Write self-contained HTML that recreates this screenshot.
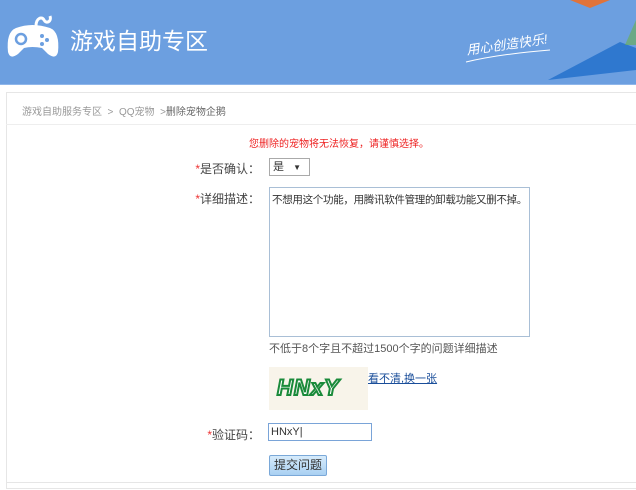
<!DOCTYPE html>
<html><head><meta charset="utf-8"><style>
body{margin:0;width:636px;height:490px;overflow:hidden;background:#fff;font-family:"Liberation Sans","Noto Sans CJK SC",sans-serif;font-size:12px;color:#333;position:relative}
.hdr{position:absolute;left:0;top:0;width:636px;height:84px;background:#6c9fe0;border-bottom:1px solid #8fb6ea;overflow:hidden}
.title{position:absolute;left:70px;top:22px;font-size:23px;color:#fff}
.box{position:absolute;left:6px;top:92px;width:640px;height:395px;background:#fff;border:1px solid #e6e6e6}
.bc{position:absolute;left:22px;top:103px;font-size:10px;color:#999}
.a{position:absolute}
.lbl{font-size:12px;color:#444;text-align:right;width:100px}
.lbl b{color:#e33;font-weight:normal}
</style></head><body>
<div class="hdr">
<svg class="a" style="left:6px;top:8px" width="54" height="52" viewBox="0 0 54 52"><path d="M30 18 C30 10 36 8 38 12 C40 16 46 14 44 8" fill="none" stroke="#fff" stroke-width="3"/><path d="M10 20 Q26 14 44 20 Q54 24 52 44 Q50 52 42 46 L36 40 Q26 38 18 40 L12 46 Q4 52 2 44 Q0 24 10 20Z" fill="#fff"/><circle cx="15" cy="31" r="5" fill="none" stroke="#6c9fe0" stroke-width="2.5"/><circle cx="36" cy="28" r="2" fill="#6c9fe0"/><circle cx="41" cy="32" r="2" fill="#6c9fe0"/><circle cx="36" cy="36" r="2" fill="#6c9fe0"/></svg>
<div class="title">游戏自助专区</div>
<div class="a" style="left:466px;top:34px;color:#fff;font-size:13px;font-style:italic;transform:rotate(-8deg)">用心创造快乐!</div>
<svg class="a" style="left:440px;top:0" width="196" height="84"><path d="M26 62 Q60 54 110 50" stroke="#fff" stroke-width="1" fill="none"/><polygon points="130,0 170,0 150,8" fill="#e0733a"/><polygon points="108,80 180,42 196,48 196,70" fill="#2f78cf"/><polygon points="196,20 196,45 185,45" fill="#6bb04a" opacity=".6"/></svg>
</div>
<div class="box"></div>
<div class="a" style="left:6px;top:124px;width:630px;border-top:1px solid #eee"></div>
<div class="bc">游戏自助服务专区 &nbsp;&gt;&nbsp; QQ宠物 &nbsp;&gt;<span style="color:#666">删除宠物企鹅</span></div>
<div class="a" style="left:249px;top:135px;font-size:10px;color:#e22">您删除的宠物将无法恢复，请谨慎选择。</div>
<div class="a lbl" style="left:160px;top:160px"><b>*</b>是否确认：</div>
<div class="a" style="left:269px;top:158px;width:36px;height:16px;border:1px solid #aaa;font-size:11px;line-height:16px;padding-left:3px">是 &nbsp;&nbsp;<span style="font-size:8px">▼</span></div>
<div class="a lbl" style="left:160px;top:190px"><b>*</b>详细描述：</div>
<div class="a" style="left:269px;top:187px;width:261px;height:150px;border:1px solid #a9bfd6;font-size:10.5px;padding:4px 2px;box-sizing:border-box;white-space:nowrap;letter-spacing:-0.3px">不想用这个功能，用腾讯软件管理的卸载功能又删不掉。</div>
<div class="a" style="left:269px;top:340px;font-size:11px;color:#555">不低于8个字且不超过1500个字的问题详细描述</div>
<div class="a" style="left:269px;top:367px;width:99px;height:43px;background:#f8f4ea"><div style="margin:8px 0 0 8px;font:bold italic 22px 'Liberation Sans';color:#fff;-webkit-text-stroke:2px #1a8a3a;letter-spacing:1px">HNxY</div></div>
<div class="a" style="left:368px;top:370px;font-size:11px;color:#1a4e9a;text-decoration:underline">看不清,换一张</div>
<div class="a lbl" style="left:160px;top:426px"><b>*</b>验证码：</div>
<div class="a" style="left:268px;top:423px;width:100px;height:16px;border:1px solid #7aa4d8;font-size:11px;line-height:16px;padding-left:2px">HNxY|</div>
<div class="a" style="left:269px;top:455px;width:56px;height:19px;border:1px solid #7aa8d8;background:linear-gradient(#d6ebfb,#a9d0f2);font-size:12px;text-align:center;line-height:19px;border-radius:2px">提交问题</div>
<div class="a" style="left:6px;top:482px;width:630px;border-top:1px solid #e6e6e6"></div>
</body></html>
